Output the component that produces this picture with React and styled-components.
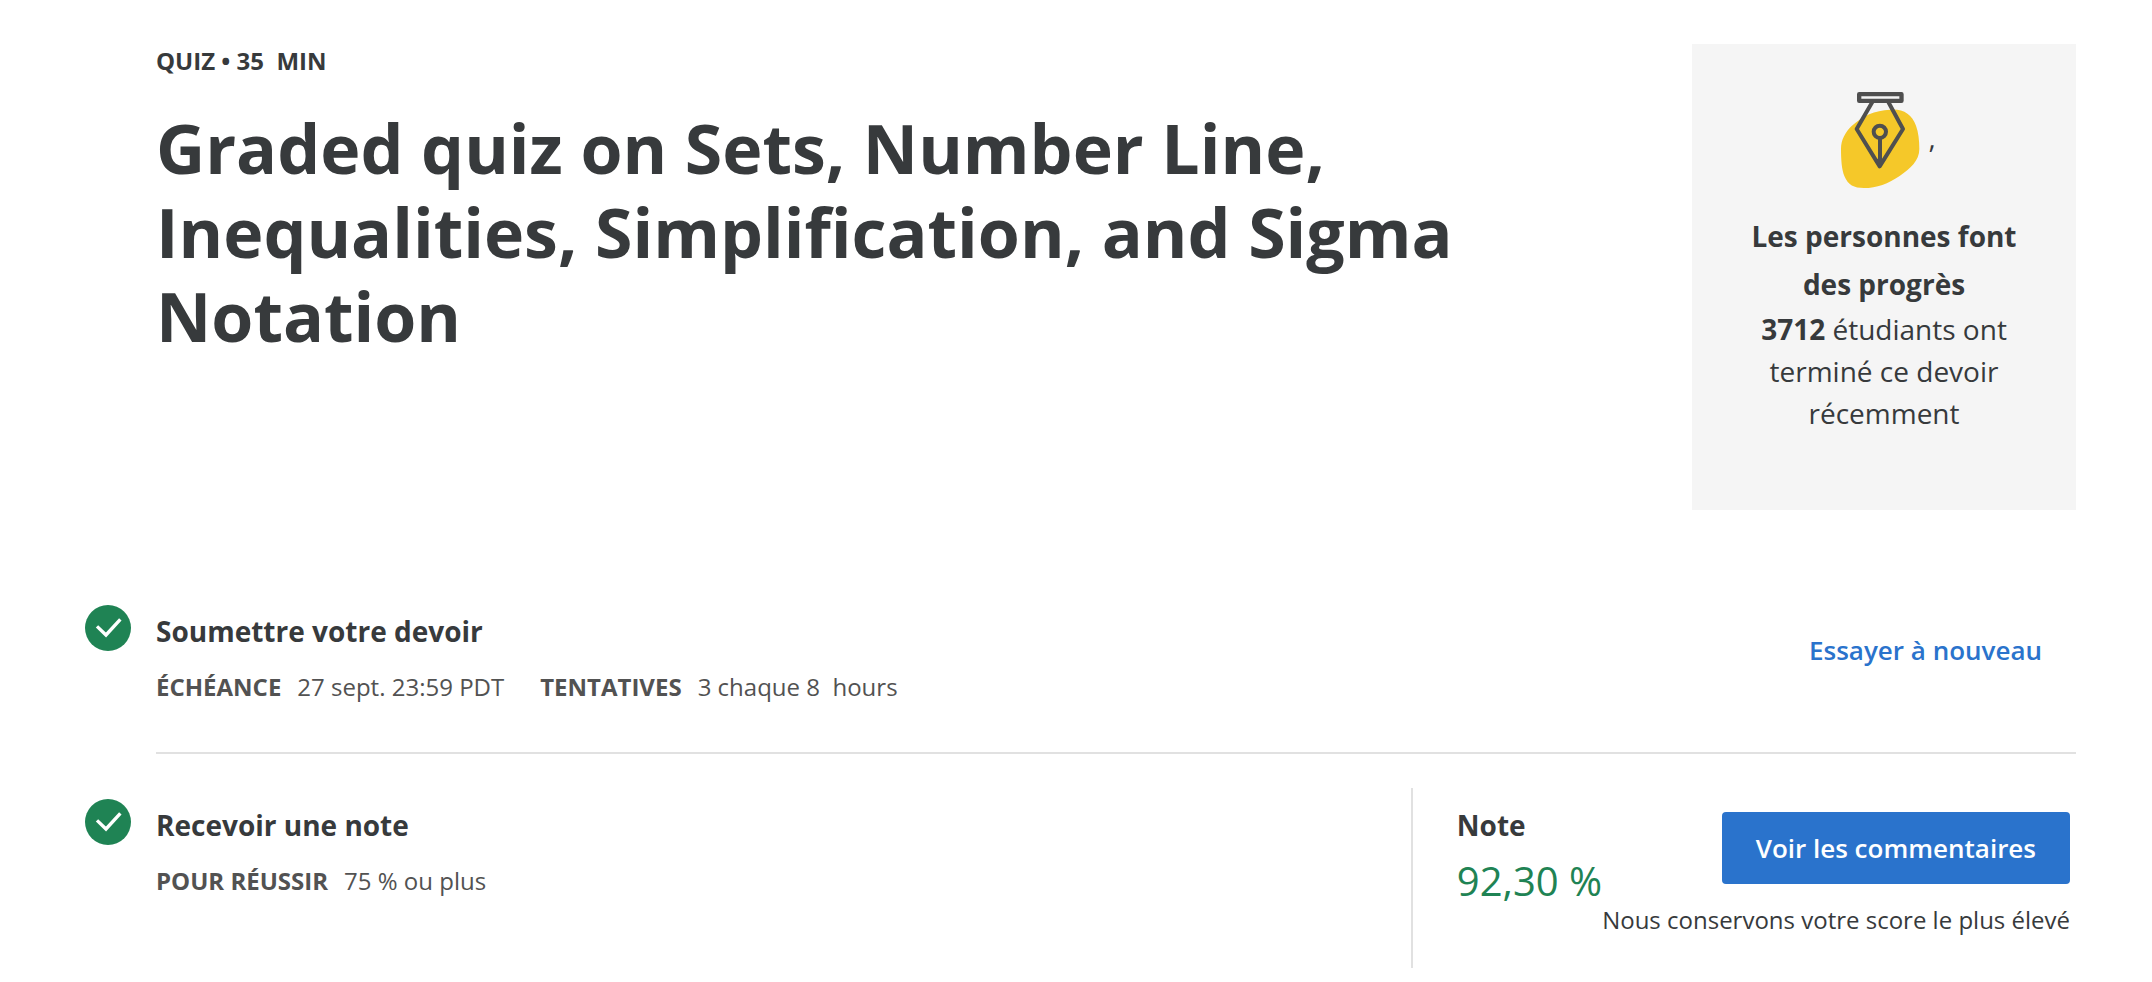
import React from "react";
import styled, { createGlobalStyle, css } from "styled-components";

const color = {
  ink: "#373a3c",
  muted: "#525252",
  blue: "#2a73cc",
  green: "#1f8354",
  line: "#e1e1e1",
  panel: "#f5f5f5",
};

const GlobalStyle = createGlobalStyle`
  *, *::before, *::after { box-sizing: border-box; }
  body {
    margin: 0;
    background: #fff;
    color: ${color.ink};
    font-family: "Open Sans", "Noto Sans", sans-serif;
  }
  h1, h2, h3, p, dl, dd, dt { margin: 0; }
`;

const Page = styled.main`
  padding: 44px 76px 14px 85px;
`;

const Header = styled.header`
  display: flex;
  align-items: stretch;
  justify-content: space-between;
  gap: 48px;
  padding-left: 71px;
  margin-bottom: 61px;
`;

const Heading = styled.div`
  flex: 1;
  display: flex;
  flex-direction: column;
  gap: 28px;
`;

const Eyebrow = styled.p`
  font-size: 24px;
  line-height: 34px;
  font-weight: 700;
  white-space: pre;
`;

const Title = styled.h1`
  font-size: 68px;
  line-height: 84px;
  font-weight: 700;
`;

const ProgressCard = styled.aside`
  flex: 0 0 384px;
  padding: 42px 48px 76px;
  background: ${color.panel};
  text-align: center;
  font-size: 28px;
  line-height: 42px;
`;

const CardFigure = styled.div`
  display: flex;
  align-items: center;
  justify-content: center;
  margin-bottom: 24px;
`;

const PenSvg = styled.svg`
  display: block;
  width: 96px;
  height: 102px;
`;

const CardTitle = styled.h2`
  font-size: 28px;
  line-height: 48px;
  font-weight: 700;
`;

const Step = styled.section`
  display: grid;
  grid-template-columns: 71px 1fr;
`;

const StepMark = styled.svg`
  display: block;
  width: 46px;
  height: 46px;
  margin-top: 34px;
`;

const StepBody = styled.div`
  display: flex;
  align-items: flex-start;
  justify-content: space-between;
  ${(p) =>
    p.$divided &&
    css`
      border-bottom: 2px solid ${color.line};
      margin-bottom: 11px;
    `}
`;

const StepInfo = styled.div`
  display: flex;
  flex-direction: column;
  gap: 18px;
  padding: 40px 0 47px;
`;

const StepTitle = styled.h3`
  font-size: 28px;
  line-height: 40px;
  font-weight: 700;
`;

const MetaList = styled.dl`
  display: flex;
  gap: 36px;
  color: ${color.muted};
  font-size: 24px;
  line-height: 36px;
`;

const MetaItem = styled.div`
  display: flex;
  gap: 16px;
  white-space: pre;

  dt { font-weight: 700; }
`;

const Actions = styled.div`
  display: flex;
  flex-direction: column;
  align-items: flex-end;
  gap: 18px;
  padding-top: ${(p) => p.$top}px;
`;

const Button = styled.button`
  height: 72px;
  padding: 0 34px;
  border: 0;
  border-radius: 4px;
  background: ${(p) => (p.$primary ? color.blue : "transparent")};
  color: ${(p) => (p.$primary ? "#fff" : color.blue)};
  font: 600 26px/36px "Open Sans", "Noto Sans", sans-serif;
  cursor: pointer;
`;

const GradePanel = styled.div`
  display: flex;
  min-height: 180px;
  margin-top: 23px;
  padding: 0 6px 0 44px;
  border-left: 2px solid ${color.line};
  white-space: nowrap;
`;

const Grade = styled.div`
  display: flex;
  flex-direction: column;
  gap: 8px;
  padding-top: 17px;
`;

const GradeValue = styled.p`
  color: ${color.green};
  font-size: 40px;
  line-height: 56px;
`;

const Hint = styled.p`
  font-size: 24px;
  line-height: 36px;
`;

function PenIcon() {
  return (
    <PenSvg viewBox="36 18 288 306" aria-hidden="true">
      <path
        fill="#f5c829"
        d="M210 89C250 86 276 103 288 137C295 156 298 180 298 207C298 243 270 266 240 287C205 311 170 324 132 324C102 324 84 315 73 288C65 268 63 240 63 206C63 180 76 157 94 139C128 107 164 91 210 89Z"
      />
      <g fill="none" stroke="#4f4f4f" strokeWidth="12" strokeLinejoin="round">
        <path d="M157 66L110 147L179 259L249 147L205 66" />
        <circle cx="179.500" cy="155.500" r="18.500" />
        <path d="M180 174V256" />
        <rect x="117.500" y="42.500" width="127" height="20" strokeWidth="13" />
      </g>
      <path fill="#4f4f4f" d="M174 236L186 236L196 240L179 262L163 240Z" />
    </PenSvg>
  );
}

function DoneMark() {
  return (
    <StepMark viewBox="0 0 138 138" role="img" aria-label="Terminé">
      <circle cx="69" cy="69" r="69" fill={color.green} />
      <path
        d="M36 64L63 90L106 43"
        fill="none"
        stroke="#fff"
        strokeWidth="10"
      />
    </StepMark>
  );
}

function Meta({ label, children }) {
  return (
    <MetaItem>
      <dt>{label}</dt>
      <dd>{children}</dd>
    </MetaItem>
  );
}

export default function App() {
  return (
    <>
      <GlobalStyle />
      <Page>
        <Header>
          <Heading>
            <Eyebrow>{"QUIZ • 35 \u00a0MIN"}</Eyebrow>
            <Title>
              Graded quiz on Sets, Number Line, Inequalities, Simplification,
              and Sigma Notation
            </Title>
          </Heading>
          <ProgressCard>
            <CardFigure>
              <PenIcon />
              <span>,</span>
            </CardFigure>
            <CardTitle>Les personnes font des progrès</CardTitle>
            <p>
              <strong>3712</strong> étudiants ont terminé ce devoir récemment
            </p>
          </ProgressCard>
        </Header>

        <Step>
          <DoneMark />
          <StepBody $divided>
            <StepInfo>
              <StepTitle>Soumettre votre devoir</StepTitle>
              <MetaList>
                <Meta label="ÉCHÉANCE">27 sept. 23:59 PDT</Meta>
                <Meta label="TENTATIVES">{"3 chaque 8 \u00a0hours"}</Meta>
              </MetaList>
            </StepInfo>
            <Actions $top={43}>
              <Button type="button">Essayer à nouveau</Button>
            </Actions>
          </StepBody>
        </Step>

        <Step>
          <DoneMark />
          <StepBody>
            <StepInfo>
              <StepTitle>Recevoir une note</StepTitle>
              <MetaList>
                <Meta label="POUR RÉUSSIR">75 % ou plus</Meta>
              </MetaList>
            </StepInfo>
            <GradePanel>
              <Grade>
                <StepTitle>Note</StepTitle>
                <GradeValue>92,30 %</GradeValue>
              </Grade>
              <Actions $top={24}>
                <Button type="button" $primary>
                  Voir les commentaires
                </Button>
                <Hint>Nous conservons votre score le plus élevé</Hint>
              </Actions>
            </GradePanel>
          </StepBody>
        </Step>
      </Page>
    </>
  );
}
